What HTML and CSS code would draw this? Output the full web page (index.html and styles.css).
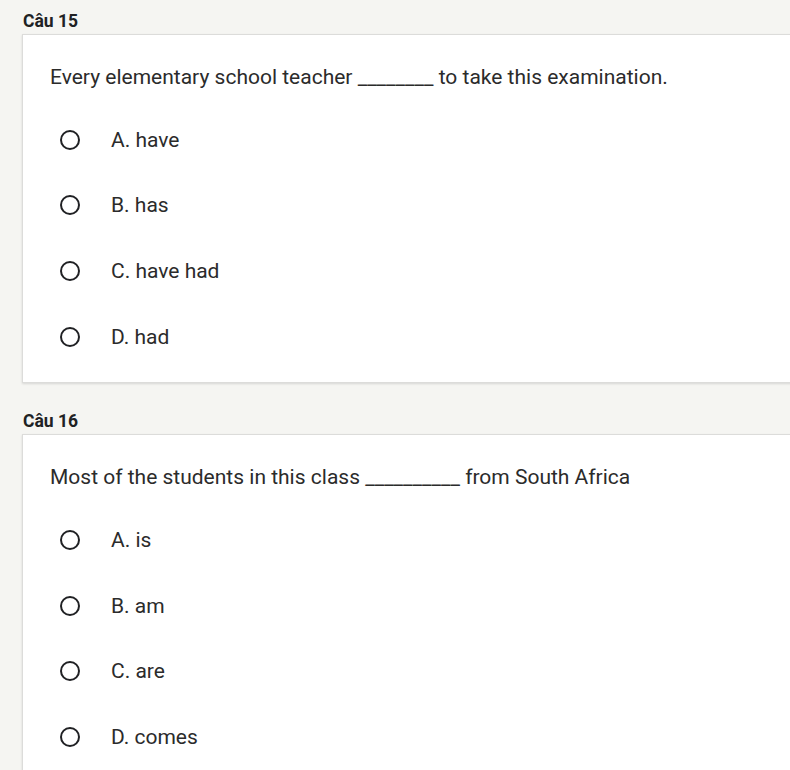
FILE: index.html
```html
<!DOCTYPE html>
<html>
<head>
<meta charset="utf-8">
<link rel="stylesheet" href="styles.css">
</head>
<body>
<div class="page">
  <section class="question">
    <h2 class="q-title">Câu 15</h2>
    <div class="card">
      <p class="q-text">Every elementary school teacher ________ to take this examination.</p>
      <ul class="options">
        <li class="option"><span class="radio"></span><span class="label">A. have</span></li>
        <li class="option"><span class="radio"></span><span class="label">B. has</span></li>
        <li class="option"><span class="radio"></span><span class="label">C. have had</span></li>
        <li class="option"><span class="radio"></span><span class="label">D. had</span></li>
      </ul>
    </div>
  </section>
  <section class="question">
    <h2 class="q-title">Câu 16</h2>
    <div class="card">
      <p class="q-text">Most of the students in this class __________ from South Africa</p>
      <ul class="options">
        <li class="option"><span class="radio"></span><span class="label">A. is</span></li>
        <li class="option"><span class="radio"></span><span class="label">B. am</span></li>
        <li class="option"><span class="radio"></span><span class="label">C. are</span></li>
        <li class="option"><span class="radio"></span><span class="label">D. comes</span></li>
      </ul>
    </div>
  </section>
</div>
</body>
</html>
```
FILE: styles.css
```css
html, body {
  margin: 0;
  padding: 0;
  background: #f5f5f2;
  font-family: Roboto, "Liberation Sans", sans-serif;
  color: #202124;
}
.page {
  padding: 11px 0 0 22px;
  display: flex;
  flex-direction: column;
  gap: 28px;
}
.q-title {
  margin: 0 0 3px 1px;
  font-size: 17.5px;
  font-weight: 700;
  line-height: 20px;
  color: #202124;
}
.card {
  background: #fff;
  border: 1px solid #dcdcda;
  border-right: none;
  box-shadow: 0 1px 2px rgba(0,0,0,0.12);
  margin-right: -10px;
  padding: 30px 0 13px 27px;
}
.q-text {
  margin: 0;
  font-size: 21px;
  line-height: 24px;
  color: #2b2b2b;
}
.options {
  list-style: none;
  margin: 18px 0 0 0;
  padding: 0;
}
.option {
  display: flex;
  align-items: center;
  height: 65.6px;
}
.radio {
  box-sizing: border-box;
  width: 20px;
  height: 20px;
  border: 2px solid #202124;
  border-radius: 50%;
  margin-left: 10px;
  margin-right: 31px;
}
.label {
  font-size: 21px;
  color: #2b2b2b;
}
```
